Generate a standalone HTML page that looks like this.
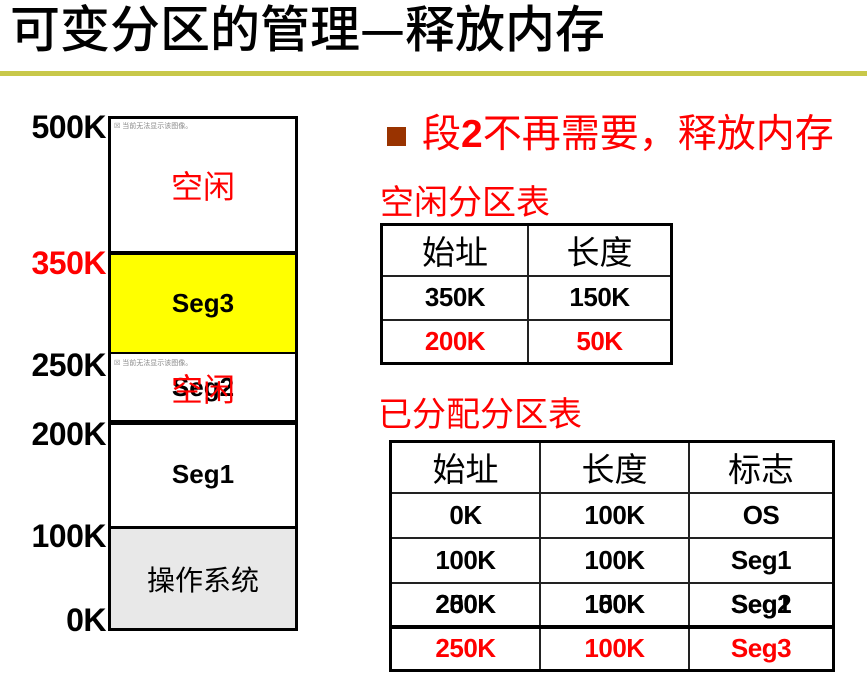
<!DOCTYPE html>
<html><head><meta charset="utf-8"><style>
body{margin:0;width:867px;height:681px;background:#fff;position:relative;overflow:hidden;font-family:"Liberation Sans","Noto Sans CJK SC",sans-serif}
.a{position:absolute}
.c{position:absolute;display:flex;align-items:center;justify-content:center;box-sizing:border-box}
.lbl{position:absolute;right:761px;font-weight:bold;font-size:32px;line-height:30px;letter-spacing:-0.5px}
.b{font-weight:bold;font-size:26px;letter-spacing:-0.5px}
.cj{font-size:33px}
.r{color:#f00}
table{position:absolute;border-collapse:collapse;border:3px solid #000}
td{border:2px solid #222;text-align:center;padding:0}
.ov{position:relative;display:inline-block}
.ov i{position:absolute;left:0;top:0;font-style:normal}
</style></head><body>
<div class="a" style="left:10px;top:-4px;font-size:50px;line-height:60px;font-family:'Noto Sans CJK SC',sans-serif;font-weight:500">可变分区的管理—释放内存</div>
<div class="a" style="left:0;top:71px;width:867px;height:5px;background:#c8c84a"></div>

<div class="lbl" style="top:112px">500K</div>
<div class="lbl r" style="top:248px">350K</div>
<div class="lbl" style="top:350px">250K</div>
<div class="lbl" style="top:419px">200K</div>
<div class="lbl" style="top:521px">100K</div>
<div class="lbl" style="top:605px">0K</div>

<div class="c r" style="left:108px;top:116px;width:190px;height:137px;border:3px solid #000;border-bottom:2px solid #000;font-size:32px">空闲</div>
<div class="a" style="left:114px;top:121px;font-size:7px;color:#888">☒ 当前无法显示该图像。</div>
<div class="c" style="left:108px;top:252px;width:190px;height:102px;background:#ff0;border:3px solid #000;border-bottom:2px solid #000;font-weight:bold;font-size:26px">Seg3</div>
<div class="c" style="left:108px;top:353px;width:190px;height:72px;border:3px solid #000;border-top:1px solid #000;border-bottom:5px solid #000;font-weight:bold;font-size:26px">Seg2</div>
<div class="c r" style="left:108px;top:368px;width:190px;height:40px;font-size:32px">空闲</div>
<div class="a" style="left:114px;top:358px;font-size:7px;color:#888">☒ 当前无法显示该图像。</div>
<div class="c" style="left:108px;top:423px;width:190px;height:105px;border:3px solid #000;border-top:0;border-bottom:2px solid #000;font-weight:bold;font-size:26px">Seg1</div>
<div class="c" style="left:108px;top:527px;width:190px;height:104px;background:#e8e8e8;border:3px solid #000;border-top:2px solid #000;font-size:28px">操作系统</div>

<div class="a" style="left:387px;top:127px;width:19px;height:19px;background:#993300"></div>
<div class="a r" style="left:422px;top:110px;font-size:39px;line-height:50px">段<b>2</b>不再需要，释放内存</div>
<div class="a r" style="left:380px;top:182px;font-size:34px;line-height:42px">空闲分区表</div>

<table style="left:380px;top:223px;width:293px">
<tr style="height:51px"><td class="cj" style="width:144px">始址</td><td class="cj">长度</td></tr>
<tr style="height:44px"><td class="b">350K</td><td class="b">150K</td></tr>
<tr style="height:44px"><td class="b r">200K</td><td class="b r">50K</td></tr>
</table>

<div class="a r" style="left:378px;top:394px;font-size:34px;line-height:42px">已分配分区表</div>
<table style="left:389px;top:440px;width:446px">
<tr style="height:51px"><td class="cj" style="width:147px">始址</td><td class="cj" style="width:147px">长度</td><td class="cj">标志</td></tr>
<tr style="height:45px"><td class="b">0K</td><td class="b">100K</td><td class="b">OS</td></tr>
<tr style="height:45px"><td class="b">100K</td><td class="b">100K</td><td class="b">Seg1</td></tr>
<tr style="height:44px;border-bottom:4px solid #000"><td class="b"><span class="ov">200K<i>250K</i></span></td><td class="b"><span class="ov">150K<i>100K</i></span></td><td class="b"><span class="ov">Seg2<i>Seg1</i></span></td></tr>
<tr style="height:44px"><td class="b r">250K</td><td class="b r">100K</td><td class="b r">Seg3</td></tr>
</table>
</body></html>
